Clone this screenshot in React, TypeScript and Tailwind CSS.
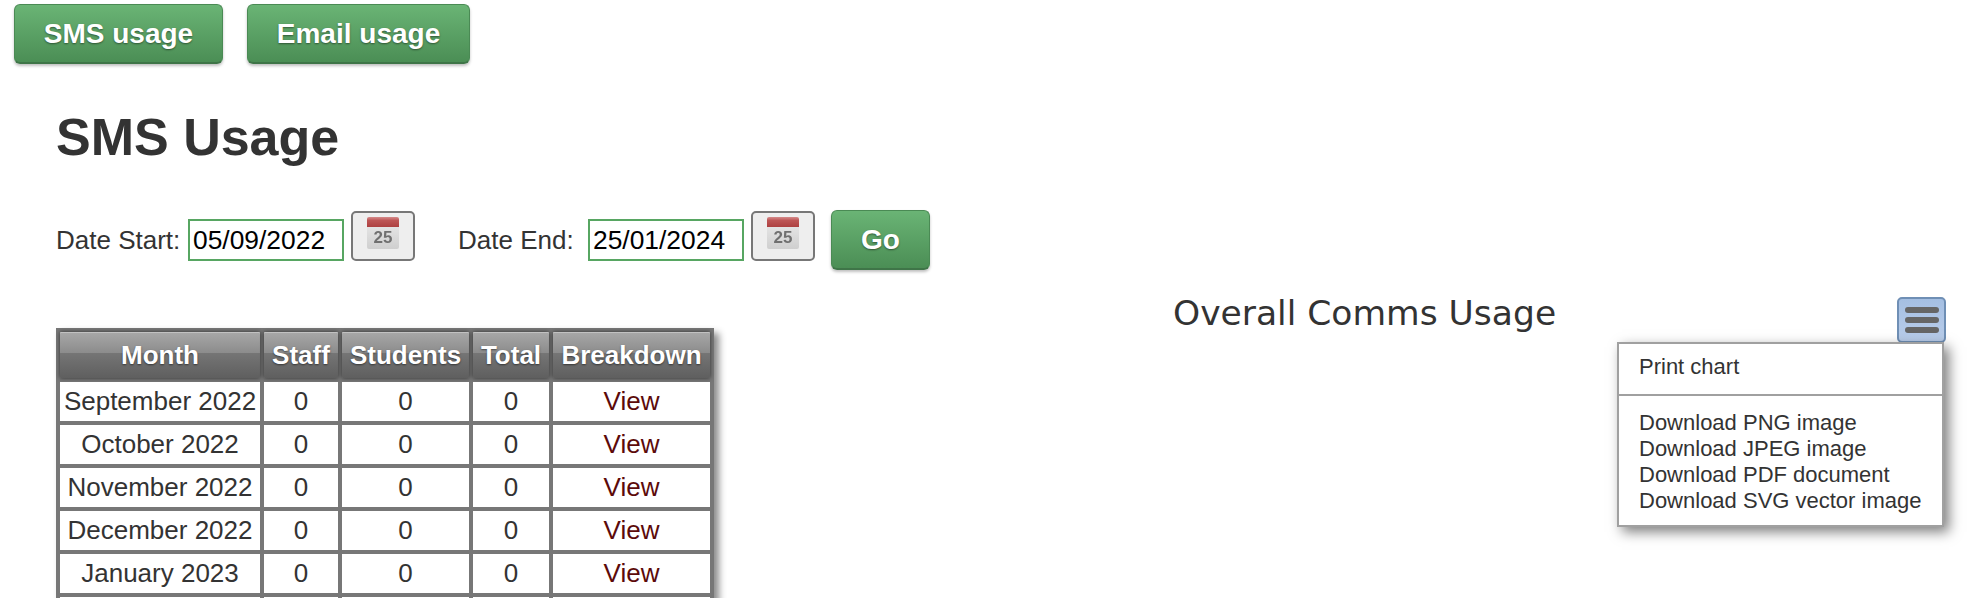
const rows = ['September 2022', 'October 2022', 'November 2022', 'December 2022', 'January 2023'];
const menuItems = ['Download PNG image', 'Download JPEG image', 'Download PDF document', 'Download SVG vector image'];

const greenButton =
  'rounded-[6px] border border-[#4a8a54] border-b-2 border-b-[#3f7548] bg-gradient-to-b from-[#6ab475] to-[#4b8e55] font-bold text-white shadow-[0_2px_3px_rgba(0,0,0,0.25)] [text-shadow:0_1px_2px_rgba(0,0,0,0.45)]';
const headCell =
  'h-[46px] rounded-[1px] bg-[linear-gradient(#a8a8a8,#8c8c8c_45%,#757575_46%,#5f5f5f)] p-0 text-center font-bold whitespace-nowrap text-white shadow-[inset_0_1px_0_rgba(255,255,255,0.3),0_0_4px_rgba(0,0,0,0.6)] [text-shadow:0_1px_2px_rgba(0,0,0,0.5)]';
const bodyCell = 'h-[39px] bg-white p-0 text-center leading-[39px]';

function CalendarIcon() {
  return (
    <svg width="34" height="34" viewBox="0 0 34 34" className="blur-[0.5px]">
      <defs>
        <linearGradient id="calTop" x1="0" y1="0" x2="0" y2="1">
          <stop offset="0" stopColor="#d58a8a" />
          <stop offset="0.35" stopColor="#bd5555" />
          <stop offset="1" stopColor="#ad4040" />
        </linearGradient>
        <linearGradient id="calBody" x1="0" y1="0" x2="0" y2="1">
          <stop offset="0" stopColor="#ececec" />
          <stop offset="1" stopColor="#cfcfcf" />
        </linearGradient>
      </defs>
      <rect x="1" y="1" width="32" height="32" rx="2" fill="url(#calBody)" />
      <path d="M1 11V3a2 2 0 0 1 2-2h28a2 2 0 0 1 2 2v8z" fill="url(#calTop)" />
      <text x="17" y="27" textAnchor="middle" fontSize="17" fontWeight="700" fill="#707070" fontFamily="'Liberation Sans', sans-serif">
        25
      </text>
    </svg>
  );
}

function DateField({ label, value, labelClass }: { label: string; value: string; labelClass: string }) {
  return (
    <>
      <span className={labelClass}>{label}</span>
      <div className="mt-2 ml-[9px] h-[42px] w-[156px] border-2 border-[#57a662] pl-[3px] text-[26.4px] leading-[38px] text-black">
        {value}
      </div>
      <button className="ml-[7px] flex h-[50px] w-[64px] justify-center rounded-[5px] border-2 border-[#777] bg-[#eeeeee] pt-[3px]">
        <CalendarIcon />
      </button>
    </>
  );
}

export default function App() {
  return (
    <div className="h-[598px] w-[1970px] overflow-hidden bg-white font-['Liberation_Sans',Arial,sans-serif] text-[#333]">
      <div className="flex gap-6 pt-1 pl-[14px]">
        <button className={`${greenButton} h-[60px] w-[209px] text-[28px]`}>SMS usage</button>
        <button className={`${greenButton} h-[60px] w-[223px] text-[28px]`}>Email usage</button>
      </div>

      <div className="pl-[56px]">
        <h1 className="mt-[43px] text-[52px] leading-[60px] font-bold">SMS Usage</h1>

        <div className="mt-[44px] flex h-[60px] items-start text-[26px]">
          <DateField label="Date Start:" value="05/09/2022" labelClass="mt-[10px] w-[123px] whitespace-nowrap" />
          <DateField label="Date End:" value="25/01/2024" labelClass="mt-[10px] ml-[43px] w-[121px] whitespace-nowrap" />
          <button className={`${greenButton} ml-4 -mt-px h-[60px] w-[99px] text-[28px]`}>Go</button>
        </div>

        <div className="mt-[57px] flex">
          <table className="h-fit w-[658px] table-fixed border-separate border-spacing-[4px] bg-[#777] text-[26px] shadow-[5px_5px_7px_rgba(0,0,0,0.45)]">
            <colgroup>
              <col className="w-[200px]" />
              <col className="w-[74px]" />
              <col className="w-[127px]" />
              <col className="w-[76px]" />
              <col className="w-[157px]" />
            </colgroup>
            <thead>
              <tr>
                <th className={headCell}>Month</th>
                <th className={headCell}>Staff</th>
                <th className={headCell}>Students</th>
                <th className={headCell}>Total</th>
                <th className={headCell}>Breakdown</th>
              </tr>
            </thead>
            <tbody>
              {rows.map((month) => (
                <tr key={month}>
                  <td className={`${bodyCell} whitespace-nowrap`}>{month}</td>
                  <td className={bodyCell}>0</td>
                  <td className={bodyCell}>0</td>
                  <td className={bodyCell}>0</td>
                  <td className={`${bodyCell} text-[#5c0a0a]`}>View</td>
                </tr>
              ))}
              {/* next row only just enters the picture */}
              <tr>
                <td className={bodyCell} />
                <td className={bodyCell} />
                <td className={bodyCell} />
                <td className={bodyCell} />
                <td className={bodyCell} />
              </tr>
            </tbody>
          </table>

          <div className="relative flex-1">
            <h2 className="-mt-[35px] ml-[459px] font-['DejaVu_Sans',sans-serif] text-[34.5px] leading-[40px] whitespace-nowrap text-[#333]">
              Overall Comms Usage
            </h2>
            <button className="absolute top-[-31px] left-[1183px] flex h-[46px] w-[49px] flex-col items-center justify-center gap-[4px] rounded-[5px] border-2 border-[#6f8fb5] bg-gradient-to-b from-[#a5bfe2] to-[#b9cdea]">
              <span className="h-[6px] w-[34px] rounded-full bg-[#666]" />
              <span className="h-[6px] w-[34px] rounded-full bg-[#666]" />
              <span className="h-[6px] w-[34px] rounded-full bg-[#666]" />
            </button>
            <div className="absolute top-[14px] left-[903px] w-[327px] border-2 border-[#a0a0a0] bg-white text-[22px] leading-[26px] text-[#333] shadow-[5px_5px_12px_rgba(0,0,0,0.5)]">
              <div className="h-[50px] pt-[10px] pl-[20px]">Print chart</div>
              <div className="h-[2px] bg-[#a0a0a0]" />
              <div className="pt-[14px] pb-[11px] pl-[20px]">
                {menuItems.map((item) => (
                  <div key={item}>{item}</div>
                ))}
              </div>
            </div>
          </div>
        </div>
      </div>
    </div>
  );
}
